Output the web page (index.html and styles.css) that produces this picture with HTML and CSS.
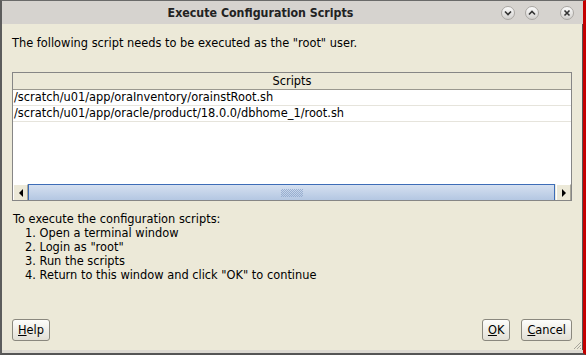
FILE: index.html
```html
<!DOCTYPE html>
<html lang="en">
<head>
  <meta charset="UTF-8" />
  <title>Execute Configuration Scripts</title>
  <link rel="stylesheet" href="styles.css">
</head>
<body>
  <div class="window">
    <div class="titlebar">
      <span class="title">Execute Configuration Scripts</span>
      <div class="wm-buttons">
        <span class="wm-btn">
          <svg width="8" height="6" viewBox="0 0 8 6"><path d="M1 1.5 L4 4.5 L7 1.5" fill="none" stroke="#333" stroke-width="1.6"/></svg>
        </span>
        <span class="wm-btn">
          <svg width="8" height="6" viewBox="0 0 8 6"><path d="M1 4.5 L4 1.5 L7 4.5" fill="none" stroke="#333" stroke-width="1.6"/></svg>
        </span>
        <span class="wm-btn wm-close">
          <svg width="8" height="8" viewBox="0 0 8 8"><path d="M1.5 1.5 L6.5 6.5 M6.5 1.5 L1.5 6.5" fill="none" stroke="#333" stroke-width="1.6"/></svg>
        </span>
      </div>
    </div>

    <div class="content">
      <p class="message">The following script needs to be executed as the "root" user.</p>

      <div class="table">
        <div class="table-head">Scripts</div>
        <div class="table-body">
          <div class="row">/scratch/u01/app/oraInventory/orainstRoot.sh</div>
          <div class="row">/scratch/u01/app/oracle/product/18.0.0/dbhome_1/root.sh</div>
        </div>
        <div class="hscroll">
          <span class="arrow-btn"><span class="tri tri-left"></span></span>
          <span class="thumb"><span class="grip"></span></span>
          <span class="arrow-btn"><span class="tri tri-right"></span></span>
        </div>
      </div>

      <div class="steps">
        <div>To execute the configuration scripts:</div>
        <ol>
          <li>Open a terminal window</li>
          <li>Login as "root"</li>
          <li>Run the scripts</li>
          <li>Return to this window and click "OK" to continue</li>
        </ol>
      </div>

      <div class="footer">
        <button class="btn"><u>H</u>elp</button>
        <div class="footer-right">
          <button class="btn"><u>O</u>K</button>
          <button class="btn"><u>C</u>ancel</button>
        </div>
      </div>
    </div>
    <div class="bottom-strip"></div>

    <svg class="grip-corner" width="9" height="9" viewBox="0 0 9 9">
      <path d="M8 1 L1 8 M8 4 L4 8 M8 7 L7 8" stroke="#a8a69c" stroke-width="1"/>
    </svg>
  </div>
</body>
</html>
```

FILE: styles.css
```css
body {
  margin: 0;
  background: #ece9d8;
  font-family: 'DejaVu Sans', sans-serif;
  font-size: 11.4px;
  color: #000;
}
.window {
  position: relative;
  box-sizing: border-box;
  width: 586px;
  height: 355px;
  display: flex;
  flex-direction: column;
  background: #ece9d8;
  border-left: 2px solid #5c5c5c;
  border-top: 1px solid #6a6a6a;
  border-right: 3px solid #c40000;
  border-bottom: 2px solid #555;
  box-shadow: inset -1px 0 0 #555;
}
.titlebar {
  height: 23px;
  flex: none;
  box-sizing: border-box;
  padding-right: 64px;
  background: #d6d3cf;
  display: flex;
  align-items: center;
  justify-content: center;
  position: relative;
}
.title {
  font-family: 'DejaVu Sans Condensed', 'DejaVu Sans', sans-serif;
  font-weight: bold;
  font-size: 12.3px;
  color: #222;
}
.wm-buttons {
  position: absolute;
  right: 9px;
  top: 5px;
  display: flex;
  gap: 10px;
}
.wm-btn {
  width: 14px;
  height: 14px;
  border-radius: 50%;
  box-sizing: border-box;
  border: 1px solid #a9a6a2;
  background: linear-gradient(#fbfbfb, #d2d0cd);
  display: flex;
  align-items: center;
  justify-content: center;
}
.wm-close {
  margin-left: 11px;
}
.content {
  flex: 1;
  display: flex;
  flex-direction: column;
  padding: 0 11px 0 10px;
}
.message {
  margin: 13px 0 0 0;
  line-height: 13px;
}
.table {
  margin-top: 22px;
  height: 129px;
  box-sizing: border-box;
  border: 1px solid #868686;
  display: flex;
  flex-direction: column;
  background: #fff;
}
.table-head {
  height: 16px;
  line-height: 16px;
  text-align: center;
  background: #ece9d8;
  border-bottom: 1px solid #9a988f;
}
.table-body {
  flex: 1;
  background: #fff;
}
.row {
  height: 15px;
  line-height: 15px;
  padding-left: 1px;
  border-bottom: 1px solid #e6e4dc;
}
.hscroll {
  height: 16px;
  display: flex;
  background: #ece9d8;
}
.arrow-btn {
  width: 15px;
  flex: none;
  box-sizing: border-box;
  background: #ece9d8;
  border-left: 1px solid #fff;
  border-top: 1px solid #fff;
  border-right: 1px solid #a8a699;
  display: flex;
  align-items: center;
  justify-content: center;
}
.tri {
  width: 0;
  height: 0;
  border-top: 4px solid transparent;
  border-bottom: 4px solid transparent;
}
.tri-left {
  border-right: 4px solid #000;
}
.tri-right {
  border-left: 4px solid #000;
}
.thumb {
  flex: 1;
  box-sizing: border-box;
  border-top: 1px solid #3d6db7;
  border-left: 1px solid #3d6db7;
  border-right: 1px solid #3d6db7;
  background: linear-gradient(#d5e0f0, #b4c7e2);
  display: flex;
  align-items: center;
  justify-content: center;
  margin-right: 1px;
}
.grip {
  width: 22px;
  height: 8px;
  background: repeating-conic-gradient(#8ea6ca 0 25%, transparent 0 50%) 0 0 / 2px 2px;
  opacity: 0.8;
}
.steps {
  margin-top: 11px;
  padding-left: 1px;
  line-height: 14px;
}
.steps ol {
  margin: 0;
  padding-left: 12px;
  list-style-position: inside;
}
.footer {
  margin-top: auto;
  margin-bottom: 9px;
  display: flex;
  justify-content: space-between;
}
.footer-right {
  display: flex;
  gap: 11px;
}
.btn {
  font-family: inherit;
  font-size: 11.4px;
  height: 22px;
  padding: 0 5px;
  min-width: 28px;
  border: 1px solid #8a887e;
  border-radius: 3px;
  background: linear-gradient(#fdfdfb, #e2dfd6);
  color: #000;
}
.bottom-strip {
  height: 3px;
  flex: none;
  background: #dcd9d2;
}
.grip-corner {
  position: absolute;
  right: 1px;
  bottom: 3px;
}
```
